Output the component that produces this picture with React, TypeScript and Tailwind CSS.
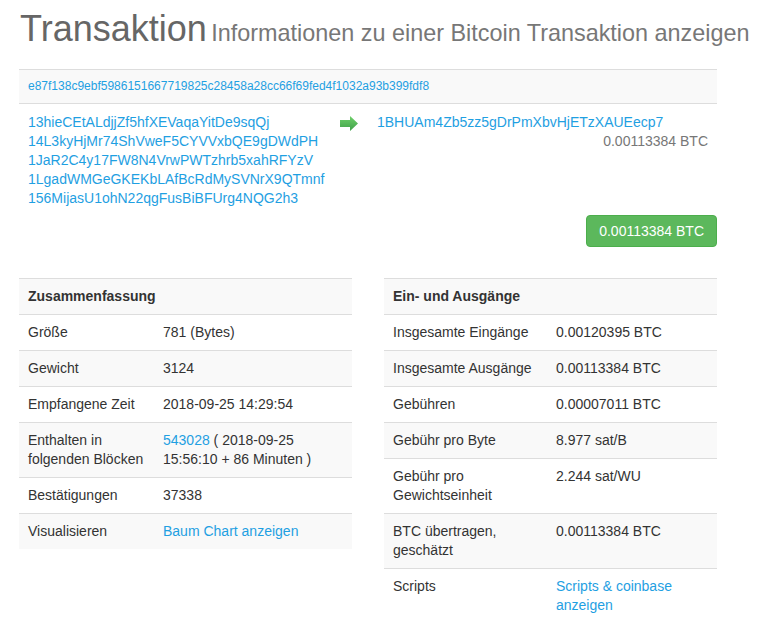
import React from "react";

const inputs = [
  "13hieCEtALdjjZf5hfXEVaqaYitDe9sqQj",
  "14L3kyHjMr74ShVweF5CYVVxbQE9gDWdPH",
  "1JaR2C4y17FW8N4VrwPWTzhrb5xahRFYzV",
  "1LgadWMGeGKEKbLAfBcRdMySVNrX9QTmnf",
  "156MijasU1ohN22qgFusBiBFUrg4NQG2h3",
];

type Row = { label: string; value: React.ReactNode };

const summary: Row[] = [
  { label: "Größe", value: "781 (Bytes)" },
  { label: "Gewicht", value: "3124" },
  { label: "Empfangene Zeit", value: "2018-09-25 14:29:54" },
  {
    label: "Enthalten in folgenden Blöcken",
    value: (
      <>
        <a className="text-[#1fa0e2]">543028</a> ( 2018-09-25 15:56:10 + 86 Minuten )
      </>
    ),
  },
  { label: "Bestätigungen", value: "37338" },
  { label: "Visualisieren", value: <a className="text-[#1fa0e2]">Baum Chart anzeigen</a> },
];

const inOut: Row[] = [
  { label: "Insgesamte Eingänge", value: "0.00120395 BTC" },
  { label: "Insgesamte Ausgänge", value: "0.00113384 BTC" },
  { label: "Gebühren", value: "0.00007011 BTC" },
  { label: "Gebühr pro Byte", value: "8.977 sat/B" },
  { label: "Gebühr pro Gewichtseinheit", value: "2.244 sat/WU" },
  { label: "BTC übertragen, geschätzt", value: "0.00113384 BTC" },
  { label: "Scripts", value: <a className="text-[#1fa0e2]">Scripts &amp; coinbase anzeigen</a> },
];

// Striped info table, header row included
const InfoTable = ({ title, rows, labelWidth }: { title: string; rows: Row[]; labelWidth: string }) => (
  <div className="text-[14px] leading-[19px] text-[#333]">
    <div className="bg-[#f9f9f9] border-t border-[#ddd] font-bold px-[9px] py-[8px]">{title}</div>
    {rows.map((row, i) => (
      <div key={row.label} className={`flex border-t border-[#ddd] ${i % 2 === 1 ? "bg-[#f9f9f9]" : "bg-white"}`}>
        <div className={`${labelWidth} shrink-0 px-[9px] py-[8px]`}>{row.label}</div>
        <div className="flex-1 px-[8px] py-[8px]">{row.value}</div>
      </div>
    ))}
  </div>
);

const Arrow = () => (
  <svg width="18" height="15" viewBox="0 0 18 15">
    <defs>
      <linearGradient id="arr" x1="0" y1="0" x2="0" y2="1">
        <stop offset="0" stopColor="#6fd06a" />
        <stop offset="1" stopColor="#3fa04a" />
      </linearGradient>
    </defs>
    <polygon points="0,4 10,4 10,0 18,7.5 10,15 10,11 0,11" fill="url(#arr)" />
  </svg>
);

const App = () => {
  return (
    <div className="w-[773px] min-h-[627px] bg-white font-['Liberation_Sans',Arial,sans-serif] text-[#333]">
      <div className="w-[698px] ml-[19px] pt-[9px]">
        <h1 className="pl-[1px] leading-[40px] text-[#666] font-normal whitespace-nowrap">
          <span className="text-[36px]">Transaktion</span>{" "}
          <span className="text-[23.4px] text-[#777]">Informationen zu einer Bitcoin Transaktion anzeigen</span>
        </h1>

        <div className="mt-[13px] bg-[#f9f9f9] border-y border-[#ddd] px-[9px] py-[8px] text-[12px] leading-[17px]">
          <a className="text-[#1fa0e2]">e87f138c9ebf5986151667719825c28458a28cc66f69fed4f1032a93b399fdf8</a>
        </div>

        <div className="mt-[9px] flex text-[14px] leading-[19px]">
          <div className="w-[321px] pl-[9px]">
            {inputs.map((addr) => (
              <div key={addr}>
                <a className="text-[#1fa0e2]">{addr}</a>
              </div>
            ))}
          </div>
          <div className="w-[37px] pt-[3px]">
            <Arrow />
          </div>
          <div className="flex-1 pr-[9px]">
            <a className="text-[#1fa0e2]">1BHUAm4Zb5zz5gDrPmXbvHjETzXAUEecp7</a>
            <div className="text-right text-[#777]">0.00113384 BTC</div>
          </div>
        </div>

        <div className="mt-[7px] flex justify-end">
          <span className="bg-[#5cb85c] border border-[#4cae4c] text-white rounded-[4px] px-[12px] h-[32px] flex items-center text-[14px]">
            0.00113384 BTC
          </span>
        </div>

        <div className="mt-[31px] grid grid-cols-2 gap-[32px] items-start">
          <InfoTable title="Zusammenfassung" rows={summary} labelWidth="w-[136px]" />
          <InfoTable title="Ein- und Ausgänge" rows={inOut} labelWidth="w-[164px]" />
        </div>
      </div>
    </div>
  );
};

export default App;
